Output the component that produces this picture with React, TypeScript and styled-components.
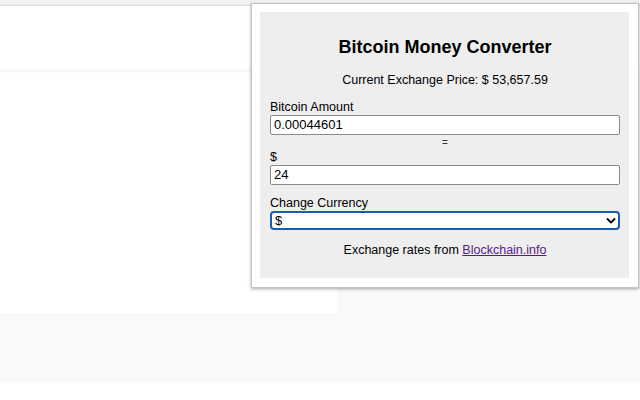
import React from "react";
import styled, { createGlobalStyle } from "styled-components";

const Global = createGlobalStyle`
  html, body { margin: 0; padding: 0; background: #ffffff; }
  body { font-family: "Liberation Sans", Arial, sans-serif; width: 640px; height: 400px; overflow: hidden; }
  * { box-sizing: border-box; }
`;

const Page = styled.div`
  position: relative;
  width: 640px;
  height: 400px;
  display: flex;
  flex-direction: column;
`;

const TopStrip = styled.div`
  height: 6px;
  background: #f2f2f2;
  border-bottom: 1px solid #dcdcdc;
`;

const Header = styled.div`
  height: 64px;
  background: #ffffff;
  box-shadow: 0 1px 3px rgba(0, 0, 0, 0.08);
  position: relative;
  z-index: 1;
`;

const Content = styled.div`
  height: 312px;
  background: #f9f9f9;
  display: flex;
  align-items: flex-start;
`;

const Card = styled.div`
  width: 338px;
  height: 243px;
  background: #ffffff;
`;

const Popup = styled.div`
  position: absolute;
  left: 251px;
  top: 3px;
  width: 388px;
  height: 285px;
  background: #ffffff;
  border: 1px solid #c4c4c4;
  box-shadow: 0 1px 3px rgba(0, 0, 0, 0.35);
  padding: 8px;
  z-index: 2;
`;

const Panel = styled.div`
  width: 369px;
  height: 266px;
  background: #eeeeee;
  padding: 24px 9px 0 10px;
  color: #000;
  font-size: 12.5px;
`;

const Title = styled.h2`
  margin: 0;
  font-size: 18px;
  line-height: 22px;
  font-weight: bold;
  text-align: center;
`;

const Price = styled.div`
  margin-top: 15px;
  line-height: 15px;
  text-align: center;
  font-size: 12.5px;
`;

const Label = styled.div<{ $gap: number }>`
  margin-top: ${(p) => p.$gap}px;
  line-height: 15px;
  font-size: 12.5px;
`;

const Field = styled.div`
  height: 20px;
  background: #ffffff;
  border: 1px solid #8a8a8a;
  border-radius: 2px;
  padding: 0 3px;
  font-size: 13px;
  line-height: 18px;
  color: #000;
`;

const Equals = styled.div`
  line-height: 15px;
  text-align: center;
  font-size: 10px;
  color: #333;
`;

const Select = styled.div`
  height: 19px;
  background: #ffffff;
  border: 2px solid #1b5cb0;
  border-radius: 4px;
  padding: 0 2px 0 3px;
  font-size: 13px;
  line-height: 15px;
  display: flex;
  align-items: center;
  justify-content: space-between;
`;

const Footer = styled.div`
  margin-top: 13px;
  line-height: 15px;
  text-align: center;
  font-size: 12.5px;
`;

const Link = styled.a`
  color: #551a8b;
  text-decoration: underline;
`;

export default function App() {
  return (
    <>
      <Global />
      <Page>
        <TopStrip />
        <Header />
        <Content>
          <Card />
        </Content>
        <Popup>
          <Panel>
            <Title>Bitcoin Money Converter</Title>
            <Price>Current Exchange Price: $ 53,657.59</Price>
            <Label $gap={12}>Bitcoin Amount</Label>
            <Field>0.00044601</Field>
            <Equals>=</Equals>
            <Label $gap={0}>$</Label>
            <Field>24</Field>
            <Label $gap={11}>Change Currency</Label>
            <Select>
              <span>$</span>
              <svg width="10" height="8" viewBox="0 0 10 8">
                <path d="M1.5 2 L5 5.5 L8.5 2" fill="none" stroke="#111" strokeWidth="2" strokeLinecap="round" strokeLinejoin="round" />
              </svg>
            </Select>
            <Footer>
              Exchange rates from <Link href="#">Blockchain.info</Link>
            </Footer>
          </Panel>
        </Popup>
      </Page>
    </>
  );
}
